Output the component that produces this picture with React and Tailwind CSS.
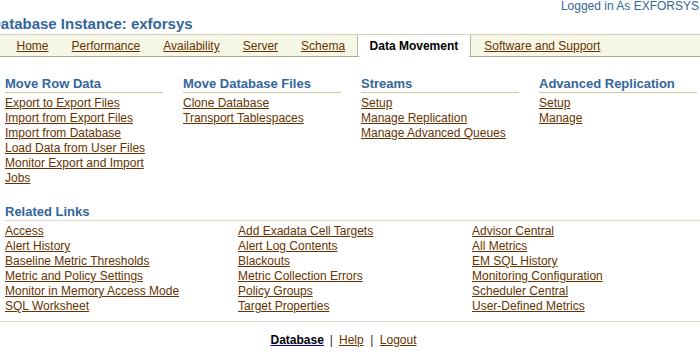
import React from "react";

const sections = [
  {
    title: "Move Row Data",
    links: [
      "Export to Export Files",
      "Import from Export Files",
      "Import from Database",
      "Load Data from User Files",
      "Monitor Export and Import",
      "Jobs",
    ],
  },
  { title: "Move Database Files", links: ["Clone Database", "Transport Tablespaces"] },
  { title: "Streams", links: ["Setup", "Manage Replication", "Manage Advanced Queues"] },
  { title: "Advanced Replication", links: ["Setup", "Manage"] },
];

const related = [
  [
    "Access",
    "Alert History",
    "Baseline Metric Thresholds",
    "Metric and Policy Settings",
    "Monitor in Memory Access Mode",
    "SQL Worksheet",
  ],
  [
    "Add Exadata Cell Targets",
    "Alert Log Contents",
    "Blackouts",
    "Metric Collection Errors",
    "Policy Groups",
    "Target Properties",
  ],
  [
    "Advisor Central",
    "All Metrics",
    "EM SQL History",
    "Monitoring Configuration",
    "Scheduler Central",
    "User-Defined Metrics",
  ],
];

const tabs = ["Home", "Performance", "Availability", "Server", "Schema"];

function Link({ children }) {
  return (
    <a href="#" className="text-[#663300] underline decoration-[#663300]">
      {children}
    </a>
  );
}

export default function App() {
  return (
    <div className="w-[700px] h-[352px] overflow-hidden bg-white font-['Liberation_Sans',Arial,sans-serif] text-[12px] text-black">
      <div className="h-[15px] text-right leading-[12px] text-[#336699] pr-[1px] whitespace-nowrap">
        Logged in As EXFORSYS
      </div>
      <div className="h-[19px] -ml-[10px] text-[15px] font-bold leading-[18px] text-[#336699] whitespace-nowrap">
        Database Instance: exforsys
      </div>

      <div className="h-[23px] border-t border-t-[#d2d2b4] border-b border-b-[#a9a98c] bg-[#f7f7e7] flex pl-[5px] whitespace-nowrap">
        {tabs.map((t) => (
          <div key={t} className="px-[11.5px] pt-[1px] leading-[20px]">
            <Link>{t}</Link>
          </div>
        ))}
        <div className="self-start h-[22px] bg-white border-l border-r border-[#b5b59a] rounded-b-[3px] px-[12px] pt-[1px] leading-[20px] font-bold text-black">
          Data Movement
        </div>
        <div className="px-[13px] pt-[1px] leading-[20px]">
          <Link>Software and Support</Link>
        </div>
      </div>

      <div className="pt-[18.5px] pl-[5px] flex">
        {sections.map((s) => (
          <div key={s.title} className="w-[178px] shrink-0 pr-[20px]">
            <div className="text-[13px] font-bold leading-[16px] text-[#336699] border-b border-[#cccc99] whitespace-nowrap">
              {s.title}
            </div>
            <div className="mt-[3.5px] leading-[15px] flex flex-col items-start whitespace-nowrap">
              {s.links.map((l) => (
                <Link key={l}>{l}</Link>
              ))}
            </div>
          </div>
        ))}
      </div>

      <div className="pl-[5px] mt-[18px]">
        <div className="text-[13px] font-bold leading-[16px] text-[#336699] border-b border-[#dcdccc]">
          Related Links
        </div>
        <div className="mt-[3px] grid grid-cols-[233px_234px_1fr] leading-[15px]">
          {related.map((col, i) => (
            <div key={i} className="flex flex-col items-start whitespace-nowrap">
              {col.map((l) => (
                <Link key={l}>{l}</Link>
              ))}
            </div>
          ))}
        </div>
      </div>

      <div className="mt-[6.5px] border-t border-[#dcdccc]" />

      <div className="mt-[11px] flex justify-center pr-[13px] leading-[15px] whitespace-nowrap">
        <a href="#" className="font-bold text-black underline decoration-[#0000cc]">
          Database
        </a>
        <span className="px-[6px] text-[#333333]">|</span>
        <Link>Help</Link>
        <span className="px-[6.5px] text-[#333333]">|</span>
        <Link>Logout</Link>
      </div>
    </div>
  );
}
